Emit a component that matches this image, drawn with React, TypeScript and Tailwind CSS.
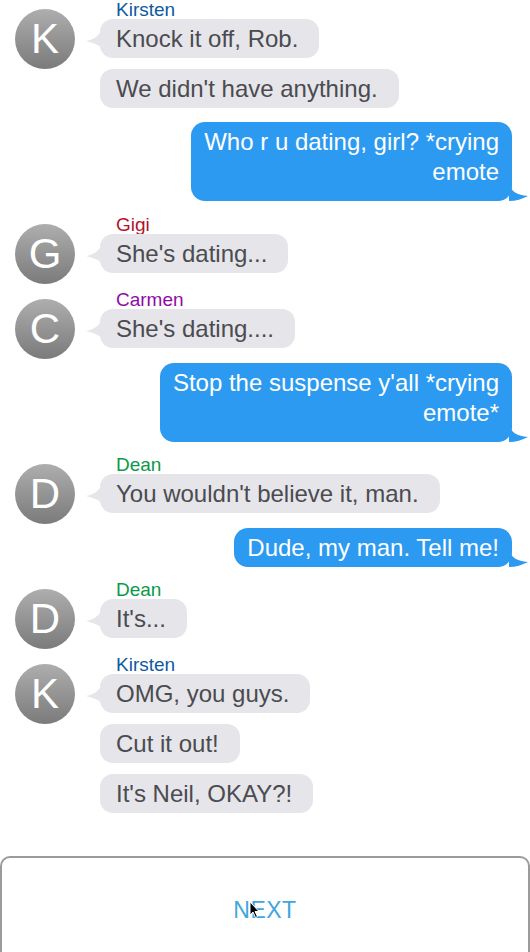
import React from 'react'

type Msg =
  | { kind: 'in'; name: string; color: string; letter: string; texts: string[]; mt: string }
  | { kind: 'out'; text: string; mt: string; cls: string }

const messages: Msg[] = [
  { kind: 'in', name: 'Kirsten', color: 'text-[#0d5aa1]', letter: 'K', texts: ['Knock it off, Rob.', "We didn't have anything."], mt: 'mt-0' },
  { kind: 'out', text: 'Who r u dating, girl? *crying emote', mt: 'mt-[14px]', cls: 'w-[321px] pl-[12px] pr-[13px] pt-[5px] pb-[14px] leading-[30px]' },
  { kind: 'in', name: 'Gigi', color: 'text-[#b4122c]', letter: 'G', texts: ["She's dating..."], mt: 'mt-[15px]' },
  { kind: 'in', name: 'Carmen', color: 'text-[#8f0aa9]', letter: 'C', texts: ["She's dating...."], mt: 'mt-[18px]' },
  { kind: 'out', text: "Stop the suspense y'all *crying emote*", mt: 'mt-[15px]', cls: 'w-[352px] pl-[12px] pr-[13px] pt-[5px] pb-[14px] leading-[30px]' },
  { kind: 'in', name: 'Dean', color: 'text-[#0a9a4a]', letter: 'D', texts: ["You wouldn't believe it, man."], mt: 'mt-[14px]' },
  { kind: 'out', text: 'Dude, my man. Tell me!', mt: 'mt-[15px]', cls: 'px-[13px] py-[6px] leading-[27px]' },
  { kind: 'in', name: 'Dean', color: 'text-[#0a9a4a]', letter: 'D', texts: ["It's..."], mt: 'mt-[14px]' },
  { kind: 'in', name: 'Kirsten', color: 'text-[#0d5aa1]', letter: 'K', texts: ['OMG, you guys.', 'Cut it out!', "It's Neil, OKAY?!"], mt: 'mt-[18px]' },
]

function Avatar({ letter }: { letter: string }) {
  return (
    <div className="w-[60px] h-[60px] -my-[11px] shrink-0 rounded-full bg-gradient-to-b from-[#aeaeae] to-[#7b7b7b] flex items-center justify-center text-white text-[42px] leading-none">
      {letter}
    </div>
  )
}

function GrayBubble({ text, tail }: { text: string; tail?: boolean }) {
  return (
    <div className="relative bg-[#e5e5ea] text-[#4b4b50] text-[24px] leading-[27px] pl-[16px] pr-[21px] py-[6px] rounded-[13px]">
      {tail && (
        <svg className="absolute -left-[14px] top-[12px]" width="16" height="16" viewBox="0 0 16 16">
          <path d="M15 0 Q11 8 0 10 Q9 12 15 16 Z" fill="#e5e5ea" />
        </svg>
      )}
      {text}
    </div>
  )
}

function Incoming({ m }: { m: Extract<Msg, { kind: 'in' }> }) {
  return (
    <div className={`flex flex-col ${m.mt}`}>
      <div className={`pl-[116px] text-[19px] leading-[18px] h-[18px] ${m.color}`}>{m.name}</div>
      <div className="flex items-center pl-[15px] gap-[25px]">
        <Avatar letter={m.letter} />
        <GrayBubble text={m.texts[0]} tail />
      </div>
      {m.texts.slice(1).map((t, i) => (
        <div key={i} className="flex pl-[100px] mt-[11px]">
          <GrayBubble text={t} />
        </div>
      ))}
    </div>
  )
}

function Outgoing({ m }: { m: Extract<Msg, { kind: 'out' }> }) {
  return (
    <div className={`flex justify-end pr-[18px] ${m.mt}`}>
      <div className={`relative bg-[#2d9af1] text-white text-[24px] text-right rounded-[14px] ${m.cls}`}>
        <svg className="absolute -right-[17px] bottom-0" width="20" height="18" viewBox="0 0 20 18">
          <path d="M0 0 C2 9 8 12 19 13 C13 16 7 18 0 18 Z" fill="#2d9af1" />
        </svg>
        {m.text}
      </div>
    </div>
  )
}

export default function App() {
  return (
    <div className="w-[530px] bg-white overflow-hidden pt-[1px]" style={{ fontFamily: '"Liberation Sans", Arial, sans-serif' }}>
      <div className="flex flex-col">
        {messages.map((m, i) =>
          m.kind === 'in' ? <Incoming key={i} m={m} /> : <Outgoing key={i} m={m} />
        )}
      </div>
      <div className="relative mt-[43px] h-[108px] border-2 border-[#9b9b9b] rounded-[10px] flex items-center justify-center">
        <span className="text-[23px] text-[#3fa6de] tracking-[0.5px]">NEXT</span>
        <svg className="absolute left-[247px] top-[43px]" width="12" height="18" viewBox="0 0 12 18">
          <path d="M1 1 L1 14 L4 11 L6.5 16.5 L8.5 15.5 L6 10.5 L10 10.5 Z" fill="#000" stroke="#fff" strokeWidth="1" />
        </svg>
      </div>
    </div>
  )
}
